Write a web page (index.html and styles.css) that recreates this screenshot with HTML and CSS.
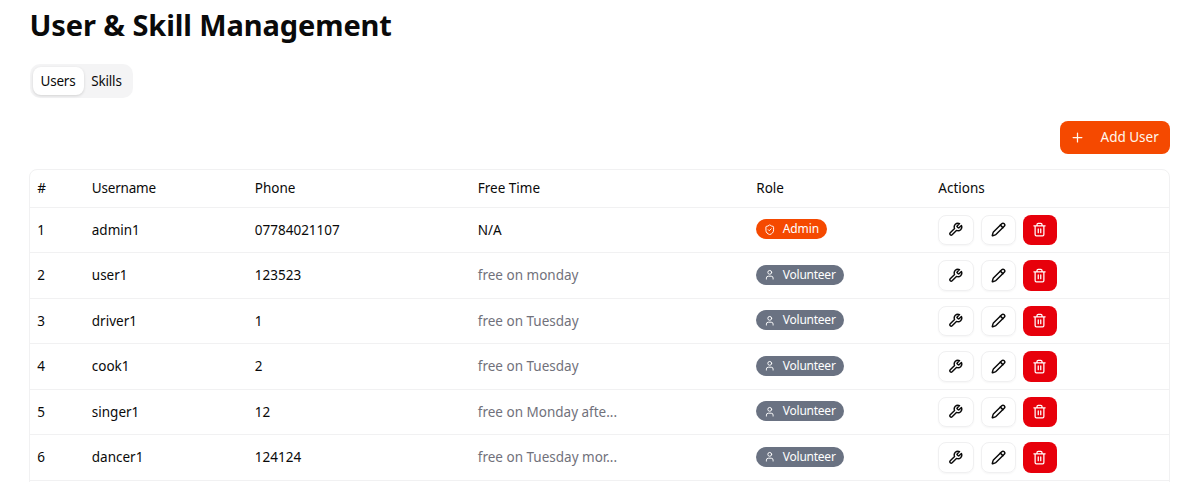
FILE: index.html
```html
<!DOCTYPE html>
<html lang="en">
<head>
<meta charset="utf-8">
<title>User &amp; Skill Management</title>
<link rel="stylesheet" href="styles.css">
</head>
<body>
<svg class="sprite" aria-hidden="true">
  <symbol id="wrench" viewBox="0 0 24 24"><path d="M14.7 6.3a1 1 0 0 0 0 1.4l1.6 1.6a1 1 0 0 0 1.4 0l3.77-3.77a6 6 0 0 1-7.94 7.94l-6.91 6.91a2.12 2.12 0 0 1-3-3l6.91-6.91a6 6 0 0 1 7.94-7.94l-3.76 3.76z"/></symbol>
  <symbol id="pencil" viewBox="0 0 24 24"><path d="M21.174 6.812a1 1 0 0 0-3.986-3.987L3.842 16.174a2 2 0 0 0-.5.83l-1.321 4.352a.5.5 0 0 0 .623.622l4.353-1.32a2 2 0 0 0 .83-.497z"/><path d="m15 5 4 4"/></symbol>
  <symbol id="trash" viewBox="0 0 24 24"><path d="M3 6h18M19 6v14c0 1-1 2-2 2H7c-1 0-2-1-2-2V6M8 6V4c0-1 1-2 2-2h4c1 0 2 1 2 2v2M10 11v6M14 11v6"/></symbol>
  <symbol id="shield" viewBox="0 0 24 24"><path d="M20 13c0 5-3.5 7.5-7.66 8.95a1 1 0 0 1-.67-.01C7.5 20.5 4 18 4 13V6a1 1 0 0 1 1-1c2 0 4.500-1.200 6.240-2.720a1.170 1.170 0 0 1 1.520 0C14.510 3.810 17 5 19 5a1 1 0 0 1 1 1z"/><path d="m9 12 2 2 4-4"/></symbol>
  <symbol id="user" viewBox="0 0 24 24"><circle cx="12" cy="7" r="4"/><path d="M19 21v-2a4 4 0 0 0-4-4H9a4 4 0 0 0-4 4v2"/></symbol>
  <symbol id="plus" viewBox="0 0 24 24"><path d="M5 12h14M12 5v14"/></symbol>
</svg>
<main class="page">
  <h1 class="title"><span>User &amp; Skill Management</span></h1>
  <div class="tabs"><button class="tab active">Users</button><button class="tab">Skills</button></div>
  <div class="toolbar"><button class="add"><svg><use href="#plus"/></svg><span>Add User</span></button></div>
  <section class="table" id="table">
    <div class="row head"><span>#</span><span>Username</span><span>Phone</span><span>Free Time</span><span>Role</span><span>Actions</span></div>
  </section>
</main>
<script src="users.js"></script>
</body>
</html>
```
FILE: styles.css
```css
* { box-sizing: border-box; }
body {
  margin: 0;
  height: 482px;
  overflow: hidden;
  background: #fff;
  color: #0a0a0a;
  font-family: "Noto Sans", "Open Sans", sans-serif;
  font-size: 13.5px;
  line-height: 19px;
}
button { font: inherit; color: inherit; border: 0; padding: 0; background: none; }
.sprite { position: absolute; width: 0; height: 0; }
svg { fill: none; stroke: currentColor; stroke-width: 2; stroke-linecap: round; stroke-linejoin: round; flex: none; }
.page { padding: 6.500px 12px 0 29.500px; }
.title { margin: 0; font-size: 29px; line-height: 36px; font-weight: 700; letter-spacing: -.1px; }
.tabs {
  display: flex;
  width: 103px;
  height: 33.500px;
  margin-top: 21.500px;
  padding: 3px;
  border-radius: 10px;
  background: #f4f4f5;
}
.tab { width: 46px; height: 27.500px; padding-top: 1px; border-radius: 8px; letter-spacing: -.2px; }
.tab.active { width: 51px; background: #fff; box-shadow: 0 1px 3px rgb(0 0 0 / 14%); }
.toolbar { display: flex; justify-content: flex-end; margin-top: 23px; }
.add {
  display: flex;
  align-items: center;
  width: 110.500px;
  height: 33.500px;
  padding-left: 10.500px;
  border-radius: 8px;
  background: #f54900;
  color: #fff7ed;
}
.add svg { width: 15px; height: 15px; margin-right: 15.500px; }
.table {
  height: 330px;
  margin: 15px 0 0 -.500px;
  border: 1px solid #f1f1f2;
  border-radius: 8px;
}
.row {
  display: grid;
  grid-template-columns: 54.500px 163px 223px 278.500px 182px 1fr;
  align-items: center;
  height: 45.500px;
  padding-left: 7.300px;
  border-bottom: 1px solid #f1f1f2;
}
.row.head { height: 37.600px; }
.row:not(.head) > span { padding-top: 1px; }
.head span:nth-child(2) { letter-spacing: -.2px; }
.muted { letter-spacing: 0; color: #71717b; }
.badge {
  display: inline-flex;
  align-items: center;
  height: 20px;
  padding: 0 8px;
  border-radius: 10px;
  background: #6a7282;
  color: #fff;
  font-size: 12px;
  line-height: 18px;
  letter-spacing: -.12px;
}
.badge.volunteer { letter-spacing: -.24px; }
.badge.admin { background: #f54900; }
.badge svg { width: 11.500px; height: 11.500px; margin-right: 7px; }
.role { display: flex; position: relative; top: -.500px; }
.actions { display: flex; gap: 7px; }
.icon-button {
  display: grid;
  place-items: center;
  width: 35.300px;
  height: 30.500px;
  border: 1px solid #f0f0f1;
  border-radius: 8px;
  box-shadow: 0 1px 2px rgb(0 0 0 / 4%);
}
.icon-button svg { width: 15px; height: 15px; stroke-width: 2.300; }
.icon-button.delete { width: 34px; border: 0; background: #e7000b; color: #fff; box-shadow: none; }
.icon-button.delete svg { stroke-width: 2; }
```
FILE: users.js
```js
const users = [
  ["admin1", "07784021107", null, "Admin"],
  ["user1", "123523", "free on monday", "Volunteer"],
  ["driver1", "1", "free on Tuesday", "Volunteer"],
  ["cook1", "2", "free on Tuesday", "Volunteer"],
  ["singer1", "12", "free on Monday afte...", "Volunteer"],
  ["dancer1", "124124", "free on Tuesday mor...", "Volunteer"]
];
const icon = (name) => `<svg><use href="#${name}"/></svg>`;
document.getElementById("table").insertAdjacentHTML("beforeend", users.map(([name, phone, time, role], i) => `
  <div class="row">
    <span>${i + 1}</span><span>${name}</span><span>${phone}</span>
    <span class="${time ? "muted" : ""}">${time || "N/A"}</span>
    <div class="role"><span class="badge ${role.toLowerCase()}">${icon(role === "Admin" ? "shield" : "user")}<span>${role}</span></span></div>
    <div class="actions">
      <button class="icon-button" aria-label="Skills">${icon("wrench")}</button>
      <button class="icon-button" aria-label="Edit">${icon("pencil")}</button>
      <button class="icon-button delete" aria-label="Delete">${icon("trash")}</button>
    </div>
  </div>`).join(""));
```
